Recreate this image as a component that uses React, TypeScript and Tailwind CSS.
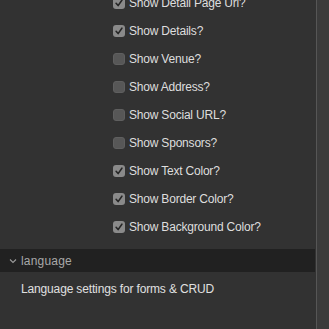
import React from "react";

const items: [string, boolean][] = [
  ["Show Detail Page Url?", true],
  ["Show Details?", true],
  ["Show Venue?", false],
  ["Show Address?", false],
  ["Show Social URL?", false],
  ["Show Sponsors?", false],
  ["Show Text Color?", true],
  ["Show Border Color?", true],
  ["Show Background Color?", true],
];

function Box({ checked }: { checked: boolean }) {
  return (
    <div
      className={
        "w-[12px] h-[12px] rounded-[3px] flex items-center justify-center " +
        (checked ? "bg-[#8a8a8a]" : "bg-[#575757] border border-[#5f5f5f]")
      }
    >
      {checked && (
        <svg width="10" height="10" viewBox="0 0 10 10">
          <path d="M2.1 5.3 L4.1 7.6 L7.9 2.2" fill="none" stroke="#262626" strokeWidth="1.6" strokeLinecap="round" strokeLinejoin="round" />
        </svg>
      )}
    </div>
  );
}

export default function App() {
  return (
    <div
      className="w-[329px] h-[329px] flex bg-[#323232] overflow-hidden"
      style={{ fontFamily: "'Liberation Sans', Arial, sans-serif" }}
    >
      <div className="w-[316px] flex flex-col">
        <div className="flex flex-col mt-[-11px] pl-[113px]">
          {items.map(([label, checked]) => (
            <div key={label} className="h-[28px] flex items-center gap-[4px]">
              <Box checked={checked} />
              <span className="text-[12px] text-[#dedede] tracking-[-0.2px]">{label}</span>
            </div>
          ))}
        </div>
        <div className="mt-[8px] h-[23px] bg-[#212121] flex items-center pl-[8px] w-[315px]">
          <svg width="10" height="10" viewBox="0 0 10 10" className="mr-[3px]">
            <path d="M2 3.5 L5 6.5 L8 3.5" fill="none" stroke="#9a9a9a" strokeWidth="1.1" />
          </svg>
          <span className="text-[12px] text-[#a8a8a8] tracking-[0.2px]">language</span>
        </div>
        <div className="pl-[21px] mt-[8px] text-[12px] text-[#e0e0e0] tracking-[-0.15px]">Language settings for forms &amp; CRUD</div>
      </div>
      <div className="w-[1px] bg-[#565656]" />
      <div className="flex-1 bg-[#3b3b3b]" />
    </div>
  );
}
